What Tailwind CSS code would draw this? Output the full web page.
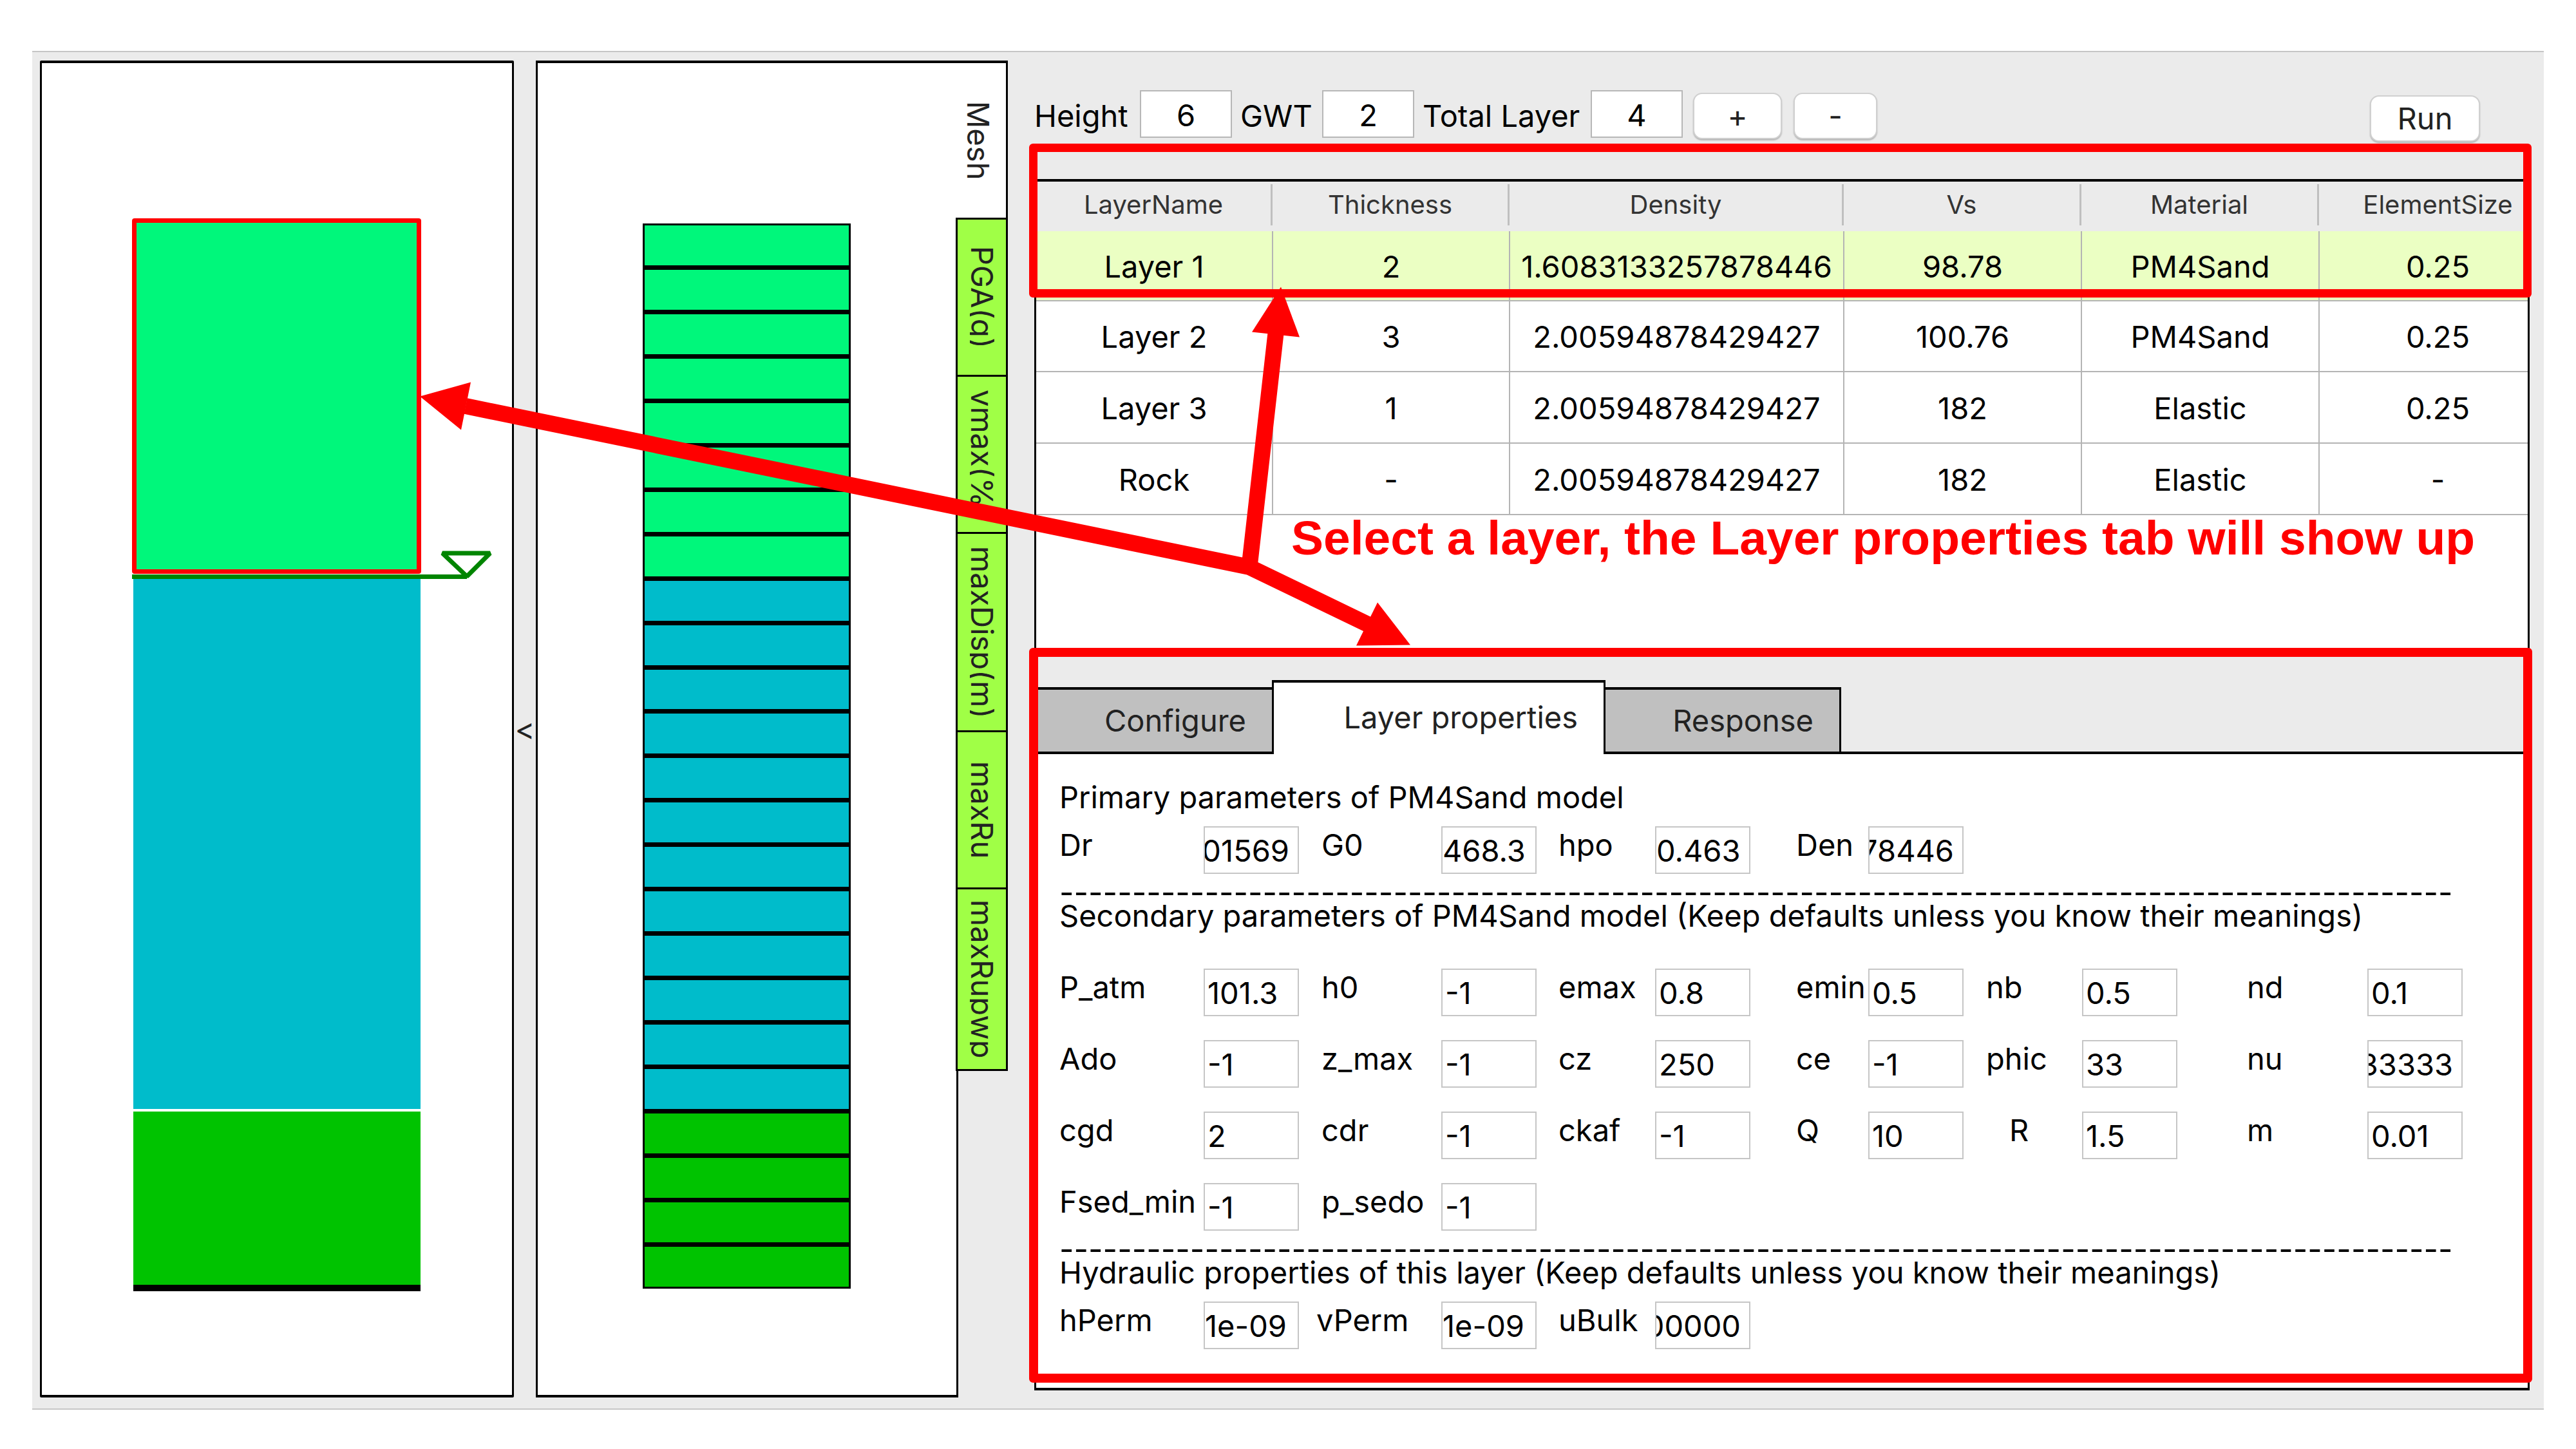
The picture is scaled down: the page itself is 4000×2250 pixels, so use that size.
<!DOCTYPE html>
<html lang="en">
<head>
<meta charset="utf-8">
<title>Site response analysis</title>
<script src="https://cdn.jsdelivr.net/npm/@tailwindcss/browser@4"></script>
</head>
<body class="bg-white font-['Inter',sans-serif] text-[47px] leading-[60px] text-black">
<main class="relative flex min-h-screen flex-col px-[50px] pt-[79px] pb-[62px]">
  <div class="flex flex-1 border-y-2 border-[#c6c6c6] bg-[#ebebeb] pt-[13px] pr-[22px] pb-[17px] pl-3">

    <!-- Soil profile -->
    <section class="flex w-[736px] shrink-0 flex-col rounded-xs border-x-[3px] border-y-4 border-black bg-white pt-[241px] pb-[161px] pl-[140px]" aria-label="Soil profile">
      <div class="flex flex-1 flex-col">
        <div class="w-[449px] grow-[538] basis-0 rounded-sm border-[7px] border-[#ff0000] bg-[#00f77b]"></div>
        <div class="relative mt-px h-[7px] w-[520px] bg-[#008500]">
          <svg class="absolute -top-[38px] right-[-41px] h-[46px] w-[84px]" viewBox="0 0 84 46" fill="none" stroke="#008500" stroke-width="7" stroke-linejoin="bevel"><path d="M5 5H79L43 41Z"/></svg>
        </div>
        <div class="ml-[2px] w-[446px] grow-[822] basis-0 bg-[#00bccb]"></div>
        <div class="mt-1 ml-[2px] w-[446px] grow-[269] basis-0 bg-[#00c300]"></div>
        <div class="ml-[2px] h-[10px] w-[446px] bg-black"></div>
      </div>
    </section>

    <button type="button" class="w-[34px] shrink-0 text-center text-[#222]" aria-label="Collapse panel">&lt;</button>

    <!-- Mesh -->
    <section class="flex w-[656px] shrink-0 flex-col border-x-[3px] border-y-4 border-black bg-white pt-[249px] pb-[165px] pl-[163px]" aria-label="Mesh">
      <div class="flex w-[323px] flex-1 flex-col gap-[7px] bg-black p-[3px]">
        <div class="flex-1 bg-[#00f77b]"></div>
        <div class="flex-1 bg-[#00f77b]"></div>
        <div class="flex-1 bg-[#00f77b]"></div>
        <div class="flex-1 bg-[#00f77b]"></div>
        <div class="flex-1 bg-[#00f77b]"></div>
        <div class="flex-1 bg-[#00f77b]"></div>
        <div class="flex-1 bg-[#00f77b]"></div>
        <div class="flex-1 bg-[#00f77b]"></div>
        <div class="flex-1 bg-[#00bccb]"></div>
        <div class="flex-1 bg-[#00bccb]"></div>
        <div class="flex-1 bg-[#00bccb]"></div>
        <div class="flex-1 bg-[#00bccb]"></div>
        <div class="flex-1 bg-[#00bccb]"></div>
        <div class="flex-1 bg-[#00bccb]"></div>
        <div class="flex-1 bg-[#00bccb]"></div>
        <div class="flex-1 bg-[#00bccb]"></div>
        <div class="flex-1 bg-[#00bccb]"></div>
        <div class="flex-1 bg-[#00bccb]"></div>
        <div class="flex-1 bg-[#00bccb]"></div>
        <div class="flex-1 bg-[#00bccb]"></div>
        <div class="flex-1 bg-[#00c300]"></div>
        <div class="flex-1 bg-[#00c300]"></div>
        <div class="flex-1 bg-[#00c300]"></div>
        <div class="flex-1 bg-[#00c300]"></div>
      </div>
    </section>
    <nav class="z-10 -ml-1 flex w-[81px] shrink-0 flex-col text-[#222]" aria-label="Result plots">
      <button type="button" class="flex h-[244px] items-center border-t-4 border-r-[3px] border-black bg-white pl-[16px]"><span class="leading-[38px] whitespace-nowrap [writing-mode:vertical-rl]">Mesh</span></button>
      <button type="button" class="flex h-[244px] items-center border-x-[3px] border-t-[3px] border-black bg-[#a0ff46] pl-[19px]"><span class="overflow-hidden leading-[38px] whitespace-nowrap [writing-mode:vertical-rl]">PGA(g)</span></button>
      <button type="button" class="flex h-[244px] items-center border-x-[3px] border-t-[3px] border-black bg-[#a0ff46] pl-[19px]"><span class="overflow-hidden leading-[38px] whitespace-nowrap [writing-mode:vertical-rl]">vmax(%)</span></button>
      <button type="button" class="flex h-[308px] items-center border-x-[3px] border-t-[3px] border-black bg-[#a0ff46] pl-[19px]"><span class="overflow-hidden leading-[38px] whitespace-nowrap [writing-mode:vertical-rl]">maxDisp(m)</span></button>
      <button type="button" class="flex h-[244px] items-center border-x-[3px] border-t-[3px] border-black bg-[#a0ff46] pl-[19px]"><span class="leading-[38px] whitespace-nowrap [writing-mode:vertical-rl]">maxRu</span></button>
      <button type="button" class="flex h-[285px] items-center border-x-[3px] border-y-[3px] border-black bg-[#a0ff46] pl-[19px]"><span class="overflow-hidden leading-[38px] whitespace-nowrap [writing-mode:vertical-rl]">maxRupwp</span></button>
    </nav>

    <div class="ml-[41px] flex min-w-0 flex-1 flex-col pt-[46px] pb-[11px]">
      <!-- Toolbar -->
      <div class="flex h-20 items-start leading-[80px]">
        <label for="height" class="w-[164px]">Height</label>
        <input id="height" value="6" class="h-[74px] w-[143px] border-2 border-[#b7b7b7] bg-white pt-1 text-center">
        <label for="gwt" class="ml-[13px] w-[127px]">GWT</label>
        <input id="gwt" value="2" class="h-[74px] w-[143px] border-2 border-[#b7b7b7] bg-white pt-1 text-center">
        <label for="total" class="ml-[13px] w-[261px]">Total Layer</label>
        <input id="total" value="4" class="h-[74px] w-[143px] border-2 border-[#b7b7b7] bg-white pt-1 text-center">
        <button type="button" class="mt-1 ml-4 h-[72px] w-[138px] rounded-[14px] border-2 border-[#d0d0d0] bg-white leading-[68px] text-[#222] shadow-[0_2px_2px_#b4b4b4]" aria-label="Add layer">+</button>
        <button type="button" class="mt-1 ml-[18px] h-[72px] w-[130px] rounded-[14px] border-2 border-[#d0d0d0] bg-white leading-[68px] text-[#222] shadow-[0_2px_2px_#b4b4b4]" aria-label="Remove layer">-</button>
        <button type="button" class="mt-2 mr-[77px] ml-auto h-[72px] w-[171px] rounded-[14px] border-2 border-[#d0d0d0] bg-white leading-[68px] text-[#222] shadow-[0_2px_2px_#b4b4b4]">Run</button>
      </div>

      <!-- Layer table -->
      <section class="relative mt-[58px] h-[734px] shrink-0">
        <div class="h-full overflow-hidden border-x-[3px] border-y-4 border-black bg-white">
          <table class="w-[2361px] table-fixed border-collapse text-center">
            <colgroup><col class="w-[367px]"><col class="w-[368px]"><col class="w-[519px]"><col class="w-[369px]"><col class="w-[369px]"><col class="w-[369px]"></colgroup>
            <thead>
              <tr class="h-[77px] bg-[#ebebeb] text-[40px] leading-[64px] text-[#333]">
                <th class="p-0 pt-1 pb-2 align-top font-normal"><div class="border-r-[3px] border-[#bfbfbf]">LayerName</div></th>
                <th class="p-0 pt-1 pb-2 align-top font-normal"><div class="border-r-[3px] border-[#bfbfbf]">Thickness</div></th>
                <th class="p-0 pt-1 pb-2 align-top font-normal"><div class="border-r-[3px] border-[#bfbfbf]">Density</div></th>
                <th class="p-0 pt-1 pb-2 align-top font-normal"><div class="border-r-[3px] border-[#bfbfbf]">Vs</div></th>
                <th class="p-0 pt-1 pb-2 align-top font-normal"><div class="border-r-[3px] border-[#bfbfbf]">Material</div></th>
                <th class="p-0 pt-1 pb-2 align-top font-normal">ElementSize</th>
              </tr>
            </thead>
            <tbody class="[&_td]:border-r-2 [&_td]:border-b-2 [&_td]:border-[#b4b4b4] [&_td]:p-0 [&_td]:pt-[2px]">
              <tr class="h-[108px] bg-[#ebffc3]"><td>Layer 1</td><td>2</td><td>1.6083133257878446</td><td>98.78</td><td>PM4Sand</td><td>0.25</td></tr>
              <tr class="h-[110px]"><td>Layer 2</td><td>3</td><td>2.00594878429427</td><td>100.76</td><td>PM4Sand</td><td>0.25</td></tr>
              <tr class="h-[111px]"><td>Layer 3</td><td>1</td><td>2.00594878429427</td><td>182</td><td>Elastic</td><td>0.25</td></tr>
              <tr class="h-[111px]"><td>Rock</td><td>-</td><td>2.00594878429427</td><td>182</td><td>Elastic</td><td>-</td></tr>
            </tbody>
          </table>
        </div>
        <div class="pointer-events-none absolute -top-[55px] -right-[3px] -left-2 h-[239px] rounded-md border-[13px] border-[#ff0000]"></div>
      </section>

      <!-- Property tabs -->
      <section class="relative mt-11 flex flex-1 flex-col">
        <div class="z-10 flex h-[111px] items-end text-[#222]" role="tablist">
          <button type="button" role="tab" class="h-[100px] w-[369px] border-t-4 border-l-[3px] border-black bg-[#c0c0c0] pr-10 text-right">Configure</button>
          <button type="button" role="tab" aria-selected="true" class="-mb-1 h-[115px] w-[518px] border-x-[3px] border-t-4 border-black bg-white pr-10 pb-1 text-right">Layer properties</button>
          <button type="button" role="tab" class="h-[100px] w-[366px] border-t-4 border-r-[3px] border-black bg-[#c0c0c0] pr-10 text-right">Response</button>
        </div>
        <form class="flex-1 border-x-[3px] border-y-4 border-black bg-white pt-[37px] pb-[60px] pl-9 whitespace-nowrap [&_input]:h-[74px] [&_input]:w-[148px] [&_input]:border-2 [&_input]:border-[#c6c6c6] [&_input]:pr-[13px] [&_input]:pl-1 [&_label]:leading-[58px]">
          <h2>Primary parameters of PM4Sand model</h2>
          <div class="mt-[15px] grid grid-cols-[224px_183px_186px_182px_150px_219px_112px_183px_149px_256px_187px_148px]">
            <label for="dr">Dr</label><input id="dr" value="01569" class="!pl-0 [direction:rtl]">
            <label for="g0">G0</label><input id="g0" value="468.3" class="!pl-0">
            <label for="hpo">hpo</label><input id="hpo" value="0.463" class="!pl-0">
            <label for="den">Den</label><input id="den" value="1.6083133257878446" class="!pl-0 [direction:rtl]">
          </div>
          <div class="h-[35px] text-[49px] leading-[57px]" aria-hidden="true">------------------------------------------------------------------------------------------------</div>
          <h2>Secondary parameters of PM4Sand model (Keep defaults unless you know their meanings)</h2>
          <div class="mt-[52px] grid grid-cols-[224px_183px_186px_182px_150px_219px_112px_183px_149px_256px_187px_148px] gap-y-[37px]">
            <label for="patm">P_atm</label><input id="patm" value="101.3">
            <label for="h0">h0</label><input id="h0" value="-1">
            <label for="emax">emax</label><input id="emax" value="0.8">
            <label for="emin">emin</label><input id="emin" value="0.5">
            <label for="nb">nb</label><input id="nb" value="0.5">
            <label for="nd">nd</label><input id="nd" value="0.1">

            <label for="ado">Ado</label><input id="ado" value="-1">
            <label for="zmax">z_max</label><input id="zmax" value="-1">
            <label for="cz">cz</label><input id="cz" value="250">
            <label for="ce">ce</label><input id="ce" value="-1">
            <label for="phic">phic</label><input id="phic" value="33">
            <label for="nu">nu</label><input id="nu" value="0.333333" class="!pl-0 [direction:rtl]">

            <label for="cgd">cgd</label><input id="cgd" value="2">
            <label for="cdr">cdr</label><input id="cdr" value="-1">
            <label for="ckaf">ckaf</label><input id="ckaf" value="-1">
            <label for="q">Q</label><input id="q" value="10">
            <label for="r" class="pl-9">R</label><input id="r" value="1.5">
            <label for="m">m</label><input id="m" value="0.01">

            <label for="fsed">Fsed_min</label><input id="fsed" value="-1">
            <label for="psedo">p_sedo</label><input id="psedo" value="-1">
          </div>
          <div class="h-[35px] text-[49px] leading-[57px]" aria-hidden="true">------------------------------------------------------------------------------------------------</div>
          <h2>Hydraulic properties of this layer (Keep defaults unless you know their meanings)</h2>
          <div class="mt-[15px] grid grid-cols-[224px_183px_186px_182px_150px_219px_112px_183px_149px_256px_187px_148px]">
            <label for="hperm">hPerm</label><input id="hperm" value="1e-09" class="!pl-0">
            <label for="vperm" class="-ml-2">vPerm</label><input id="vperm" value="1e-09" class="!pl-0">
            <label for="ubulk">uBulk</label><input id="ubulk" value="2200000" class="!pl-0 [direction:rtl]">
          </div>
        </form>
        <div class="pointer-events-none absolute -top-[50px] -right-1 bottom-3 -left-2 z-20 rounded-md border-[14px] border-[#ff0000]"></div>
      </section>
    </div>
  </div>

  <!-- Annotation -->
  <svg class="pointer-events-none absolute inset-0 z-30 h-full w-full" viewBox="0 0 4000 2250" fill="#ff0000" stroke="none">
    <path d="M723 630L1940 880L1981 517M1940 880L2124 969" fill="none" stroke="#ff0000" stroke-width="25"/>
    <path d="M652 615L731 593L716 667Z"/>
    <path d="M1989 445L2018 523L1944 515Z"/>
    <path d="M2190 1001L2106 1002L2139 935Z"/>
  </svg>
  <p class="absolute top-[798px] left-[2005px] z-30 font-['Liberation_Sans',sans-serif] text-[75px] leading-[75px] font-bold whitespace-nowrap text-[#ff0000]">Select a layer, the Layer properties tab will show up</p>
</main>
</body>
</html>
